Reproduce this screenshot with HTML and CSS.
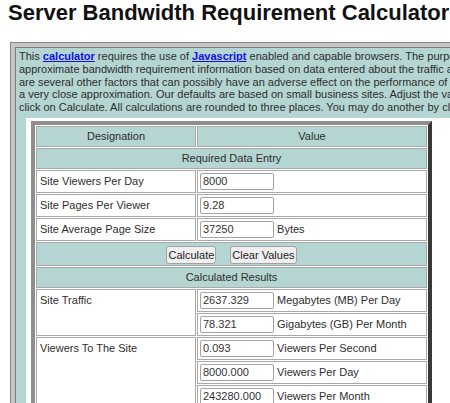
FILE: index.html
```html
<!DOCTYPE html>
<html>
<head>
<meta charset="utf-8">
<title>Server Bandwidth Requirement Calculator</title>
<link rel="stylesheet" href="styles.css">
</head>
<body>
<h1 class="title">Server Bandwidth Requirement Calculator</h1>
<div class="frame">
  <div class="frame-cell">
    <p class="intro">This <a href="#">calculator</a> requires the use of <a href="#">Javascript</a> enabled and capable browsers. The purpose of this calculator is to provide<br>approximate bandwidth requirement information based on data entered about the traffic and size of your site. There<br>are several other factors that can possibly have an adverse effect on the performance of your site, so this is only<br>a very close approximation. Our defaults are based on small business sites. Adjust the values to your needs and<br>click on Calculate. All calculations are rounded to three places. You may do another by clicking on Clear Values.</p>
    <div class="sheet">
      <table class="calc">
        <colgroup><col class="c1"><col class="c2"></colgroup>
        <tr><th class="head">Designation</th><th class="head">Value</th></tr>
        <tr><th class="head" colspan="2">Required Data Entry</th></tr>
        <tr><td class="label">Site Viewers Per Day</td><td class="val"><input class="num" type="text" value="8000"></td></tr>
        <tr><td class="label">Site Pages Per Viewer</td><td class="val"><input class="num" type="text" value="9.28"></td></tr>
        <tr><td class="label">Site Average Page Size</td><td class="val"><input class="num" type="text" value="37250"> Bytes</td></tr>
        <tr><td class="actions" colspan="2"><button class="btn" type="button">Calculate</button><button class="btn" type="button">Clear Values</button></td></tr>
        <tr><th class="head" colspan="2">Calculated Results</th></tr>
        <tr><td class="label top" rowspan="2">Site Traffic</td><td class="val"><input class="num" type="text" value="2637.329"> Megabytes (MB) Per Day</td></tr>
        <tr><td class="val"><input class="num" type="text" value="78.321"> Gigabytes (GB) Per Month</td></tr>
        <tr><td class="label top" rowspan="3">Viewers To The Site</td><td class="val"><input class="num" type="text" value="0.093"> Viewers Per Second</td></tr>
        <tr><td class="val"><input class="num" type="text" value="8000.000"> Viewers Per Day</td></tr>
        <tr><td class="val"><input class="num" type="text" value="243280.000"> Viewers Per Month</td></tr>
      </table>
    </div>
  </div>
</div>
</body>
</html>
```
FILE: styles.css
```css
html {
  overflow: hidden;
}
body {
  margin: 0;
  background: #ffffff;
  color: #222222;
  font-family: "Liberation Sans", Arial, sans-serif;
}
.title {
  margin: 0;
  padding-left: 8px;
  font-size: 22px;
  line-height: 25px;
  font-weight: bold;
  color: #111111;
  white-space: nowrap;
}
.frame {
  margin: 17px 0 0 10px;
  width: 640px;
  border: 1px solid #858585;
  background: #c6c6c6;
  padding: 4px;
}
.frame-cell {
  border: 1px solid;
  border-color: #7c7c7c #e2e2e2 #e2e2e2 #7c7c7c;
  background: #b4d5d1;
  padding: 2px 3px 0 3px;
}
.intro {
  margin: 0 0 4px 0;
  font-size: 11px;
  line-height: 12.75px;
  white-space: nowrap;
  color: #2e2e2e;
}
.intro a {
  color: #1010ee;
  font-weight: bold;
  text-decoration: underline;
}
.sheet {
  margin-left: 7px;
  width: 600px;
  background: #ffffff;
  padding: 3px 5px;
}
.calc {
  border-collapse: separate;
  border-spacing: 1px;
  border: 4px solid;
  border-color: #8e8e8e #383838 #383838 #8e8e8e;
  width: 401px;
  table-layout: fixed;
  font-size: 11px;
  color: #2e2e2e;
}
.c1 { width: 160px; }
.calc th,
.calc td {
  border: 1px solid #a9a9a9;
}
.head {
  background: #b4d5d1;
  font-weight: normal;
  text-align: center;
  line-height: 15px;
  padding: 2px 3px;
}
.label {
  background: #ffffff;
  padding: 2px 3px;
  line-height: 17px;
  white-space: nowrap;
}
.label.top {
  vertical-align: top;
  padding-top: 2px;
}
.val {
  background: #ffffff;
  padding: 2px 2px;
  line-height: 17px;
  white-space: nowrap;
}
.num {
  box-sizing: border-box;
  width: 74px;
  height: 17px;
  margin: 0;
  padding: 0 2px;
  border: 1px solid #a3a3a3;
  border-radius: 2px;
  font-family: "Liberation Sans", Arial, sans-serif;
  font-size: 11px;
  color: #333333;
  vertical-align: top;
}
.actions {
  background: #b4d5d1;
  text-align: center;
  padding: 3px 2px 1px;
  line-height: 18px;
}
.btn {
  box-sizing: border-box;
  height: 18px;
  margin: 0 7px;
  padding: 0 1px;
  border: 1px solid #a3a3a3;
  border-radius: 3px;
  background: #efefef;
  font-family: "Liberation Sans", Arial, sans-serif;
  font-size: 11px;
  color: #222222;
  vertical-align: top;
}
```
